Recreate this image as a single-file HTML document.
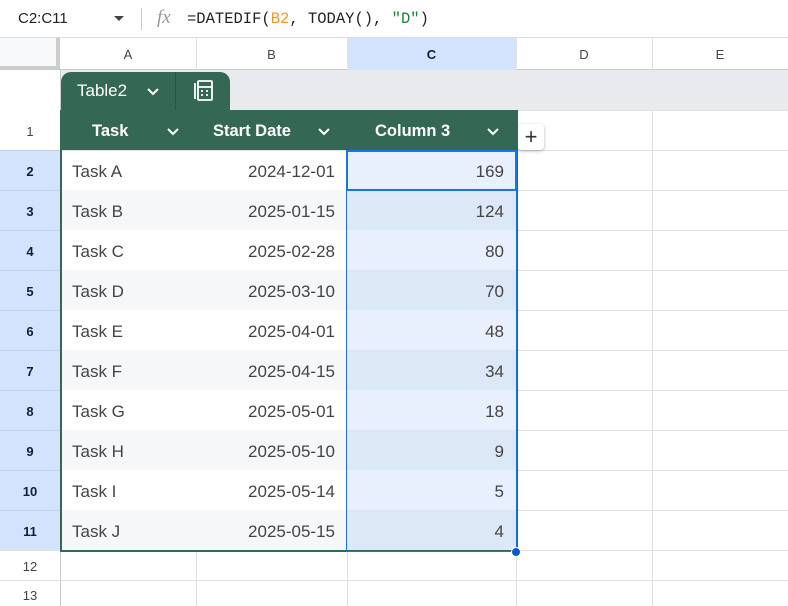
<!DOCTYPE html><html><head><style>
*{margin:0;padding:0;box-sizing:border-box}
body{width:788px;height:606px;overflow:hidden;background:#fff;font-family:"Liberation Sans",Arial,sans-serif;position:relative;color:#3c4043}
div{position:absolute}
.hl{height:1px;background:#e1e1e1;left:0;width:788px}
.vl{width:1px;background:#e1e1e1}
.rh{left:0;width:60px;text-align:center;font-size:13px;color:#444}
.rs{background:#d3e3fd;font-weight:bold;color:#0b1f44}
.cell{font-size:17px;color:#444;height:40px;line-height:40px}
</style></head><body>
<div style="left:0;top:0;width:788px;height:38px;border-bottom:1px solid #ddd"></div>
<div style="left:18px;top:10px;font-size:15px;color:#222">C2:C11</div>
<div style="left:114px;top:16px;border-left:5px solid transparent;border-right:5px solid transparent;border-top:5px solid #444"></div>
<div style="left:141px;top:8px;width:1px;height:22px;background:#ccc"></div>
<div style="left:157px;top:7px;font-size:19px;font-style:italic;color:#999;font-family:'Liberation Serif',serif">fx</div>
<div style="left:187px;top:10px;font-size:15.5px;font-family:'Liberation Mono',monospace;color:#222;white-space:pre">=DATEDIF(<span style="color:#f7981d">B2</span>, TODAY(), <span style="color:#188038">"D"</span>)</div>
<!-- column header -->
<div style="left:0;top:38px;width:788px;height:32px;background:#fff;border-bottom:1px solid #ccc"></div>
<div style="left:0;top:38px;width:60px;height:32px;background:#f8f9fa;border-right:4px solid #ccc;border-bottom:4px solid #ccc"></div>
<div style="left:347px;top:38px;width:169px;height:32px;background:#d3e3fd"></div>
<div style="left:60px;top:47px;width:136px;text-align:center;font-size:13px;color:#444">A</div>
<div style="left:196px;top:47px;width:151px;text-align:center;font-size:13px;color:#444">B</div>
<div style="left:347px;top:47px;width:169px;text-align:center;font-size:13px;color:#0b1f44;font-weight:bold">C</div>
<div style="left:516px;top:47px;width:136px;text-align:center;font-size:13px;color:#444">D</div>
<div style="left:652px;top:47px;width:136px;text-align:center;font-size:13px;color:#444">E</div>
<div class="vl" style="left:196px;top:38px;height:32px"></div>
<div class="vl" style="left:347px;top:38px;height:32px"></div>
<div class="vl" style="left:516px;top:38px;height:568px"></div>
<div class="vl" style="left:652px;top:38px;height:568px"></div>
<div class="vl" style="left:60px;top:70px;height:536px;background:#ccc"></div>
<!-- grey band row -->
<div style="left:61px;top:70px;width:727px;height:40px;background:#e8eaed"></div>
<div style="left:61px;top:72px;width:169px;height:38px;background:#356854;border-radius:10px 10px 0 0"></div>
<div style="left:175px;top:72px;width:1px;height:38px;background:#2a5544"></div>
<div style="left:77px;top:81px;font-size:17px;color:#fff">Table2</div>
<svg style="position:absolute;left:146px;top:87px" width="14" height="10"><path d="M2 2l5 5 5-5" stroke="#fff" stroke-width="2" fill="none"/></svg>
<svg style="position:absolute;left:191px;top:79px" width="24" height="24" fill="none" stroke="#fff" stroke-width="1.8"><path d="M4 4v16"/><rect x="7" y="2" width="14" height="19" rx="1"/><path d="M7 8h14M10 12h2M15 12h2M10 16h2M15 16h2"/></svg>
<!-- rows -->
<div class="hl" style="top:150px"></div>
<div class="rh" style="top:124px">1</div>
<div style="left:61px;top:110px;width:456px;height:40px;background:#356854"></div>
<div style="left:92px;top:122px;font-size:16.5px;font-weight:bold;color:#fff">Task</div>
<div style="left:213px;top:122px;font-size:16.5px;font-weight:bold;color:#fff">Start Date</div>
<div style="left:375px;top:122px;font-size:16.5px;font-weight:bold;color:#fff">Column 3</div>
<svg style="position:absolute;left:166px;top:127px" width="14" height="10"><path d="M2 2l5 5 5-5" stroke="#fff" stroke-width="2" fill="none"/></svg>
<svg style="position:absolute;left:317px;top:127px" width="14" height="10"><path d="M2 2l5 5 5-5" stroke="#fff" stroke-width="2" fill="none"/></svg>
<svg style="position:absolute;left:486px;top:127px" width="14" height="10"><path d="M2 2l5 5 5-5" stroke="#fff" stroke-width="2" fill="none"/></svg>
<div style="left:518px;top:124px;width:26px;height:26px;background:#fff;border-radius:4px;box-shadow:0 1px 3px rgba(0,0,0,.3);font-size:22px;line-height:25px;text-align:center;color:#333">+</div>

<div style="left:0;top:150px;width:61px;height:400px;background:#d3e3fd"></div>
<div style="left:61px;top:190px;width:286px;height:40px;background:#f5f7f8"></div>
<div style="left:61px;top:270px;width:286px;height:40px;background:#f5f7f8"></div>
<div style="left:61px;top:350px;width:286px;height:40px;background:#f5f7f8"></div>
<div style="left:61px;top:430px;width:286px;height:40px;background:#f5f7f8"></div>
<div style="left:61px;top:510px;width:286px;height:40px;background:#f5f7f8"></div>
<div style="left:347px;top:150px;width:169px;height:400px;background:#e8f0fe"></div>
<div style="left:347px;top:190px;width:169px;height:40px;background:#dde8f7"></div>
<div style="left:347px;top:270px;width:169px;height:40px;background:#dde8f7"></div>
<div style="left:347px;top:350px;width:169px;height:40px;background:#dde8f7"></div>
<div style="left:347px;top:430px;width:169px;height:40px;background:#dde8f7"></div>
<div style="left:347px;top:510px;width:169px;height:40px;background:#dde8f7"></div>
<div class="hl" style="top:150px;left:0;width:61px;background:#c5d3ea"></div>
<div class="hl" style="top:190px;left:0;width:61px;background:#c5d3ea"></div>
<div class="hl" style="top:230px;left:0;width:61px;background:#c5d3ea"></div>
<div class="hl" style="top:270px;left:0;width:61px;background:#c5d3ea"></div>
<div class="hl" style="top:310px;left:0;width:61px;background:#c5d3ea"></div>
<div class="hl" style="top:350px;left:0;width:61px;background:#c5d3ea"></div>
<div class="hl" style="top:390px;left:0;width:61px;background:#c5d3ea"></div>
<div class="hl" style="top:430px;left:0;width:61px;background:#c5d3ea"></div>
<div class="hl" style="top:470px;left:0;width:61px;background:#c5d3ea"></div>
<div class="hl" style="top:510px;left:0;width:61px;background:#c5d3ea"></div>
<div class="hl" style="top:190px;left:516px;width:272px"></div>
<div class="hl" style="top:230px;left:516px;width:272px"></div>
<div class="hl" style="top:270px;left:516px;width:272px"></div>
<div class="hl" style="top:310px;left:516px;width:272px"></div>
<div class="hl" style="top:350px;left:516px;width:272px"></div>
<div class="hl" style="top:390px;left:516px;width:272px"></div>
<div class="hl" style="top:430px;left:516px;width:272px"></div>
<div class="hl" style="top:470px;left:516px;width:272px"></div>
<div class="hl" style="top:510px;left:516px;width:272px"></div>
<div class="hl" style="top:110px;left:516px;width:272px"></div>
<div class="hl" style="top:550px"></div>
<div class="hl" style="top:580px"></div>
<div class="vl" style="left:196px;top:552px;height:54px"></div>
<div class="vl" style="left:347px;top:552px;height:54px"></div>

<div class="rh rs" style="top:164px">2</div>
<div class="rh rs" style="top:204px">3</div>
<div class="rh rs" style="top:244px">4</div>
<div class="rh rs" style="top:284px">5</div>
<div class="rh rs" style="top:324px">6</div>
<div class="rh rs" style="top:364px">7</div>
<div class="rh rs" style="top:404px">8</div>
<div class="rh rs" style="top:444px">9</div>
<div class="rh rs" style="top:484px">10</div>
<div class="rh rs" style="top:524px">11</div>
<div class="rh" style="top:559px">12</div>
<div class="rh" style="top:588px">13</div>

<div style="left:61px;top:152px;width:286px;font-size:17px;color:#444">
<div class="cell" style="position:static;padding-left:11px">Task A<span style="float:right;padding-right:12px">2024-12-01</span></div>
<div class="cell" style="position:static;padding-left:11px">Task B<span style="float:right;padding-right:12px">2025-01-15</span></div>
<div class="cell" style="position:static;padding-left:11px">Task C<span style="float:right;padding-right:12px">2025-02-28</span></div>
<div class="cell" style="position:static;padding-left:11px">Task D<span style="float:right;padding-right:12px">2025-03-10</span></div>
<div class="cell" style="position:static;padding-left:11px">Task E<span style="float:right;padding-right:12px">2025-04-01</span></div>
<div class="cell" style="position:static;padding-left:11px">Task F<span style="float:right;padding-right:12px">2025-04-15</span></div>
<div class="cell" style="position:static;padding-left:11px">Task G<span style="float:right;padding-right:12px">2025-05-01</span></div>
<div class="cell" style="position:static;padding-left:11px">Task H<span style="float:right;padding-right:12px">2025-05-10</span></div>
<div class="cell" style="position:static;padding-left:11px">Task I<span style="float:right;padding-right:12px">2025-05-14</span></div>
<div class="cell" style="position:static;padding-left:11px">Task J<span style="float:right;padding-right:12px">2025-05-15</span></div>
</div>
<div style="left:347px;top:152px;width:169px;text-align:right">
<div class="cell" style="position:static;padding-right:12px">169</div>
<div class="cell" style="position:static;padding-right:12px">124</div>
<div class="cell" style="position:static;padding-right:12px">80</div>
<div class="cell" style="position:static;padding-right:12px">70</div>
<div class="cell" style="position:static;padding-right:12px">48</div>
<div class="cell" style="position:static;padding-right:12px">34</div>
<div class="cell" style="position:static;padding-right:12px">18</div>
<div class="cell" style="position:static;padding-right:12px">9</div>
<div class="cell" style="position:static;padding-right:12px">5</div>
<div class="cell" style="position:static;padding-right:12px">4</div>
</div>
<!-- table border -->
<div style="left:60px;top:110px;width:458px;height:442px;border:2px solid #356854;border-top:none"></div>
<!-- selection -->
<div style="left:346px;top:150px;width:171px;height:402px;border:1px solid #1a73e8"></div>
<div style="left:346px;top:150px;width:171px;height:41px;border:2px solid #1a73e8"></div>
<div style="left:511px;top:547px;width:10px;height:10px;border-radius:50%;background:#0b57d0;border:1px solid #fff"></div>
</body></html>
